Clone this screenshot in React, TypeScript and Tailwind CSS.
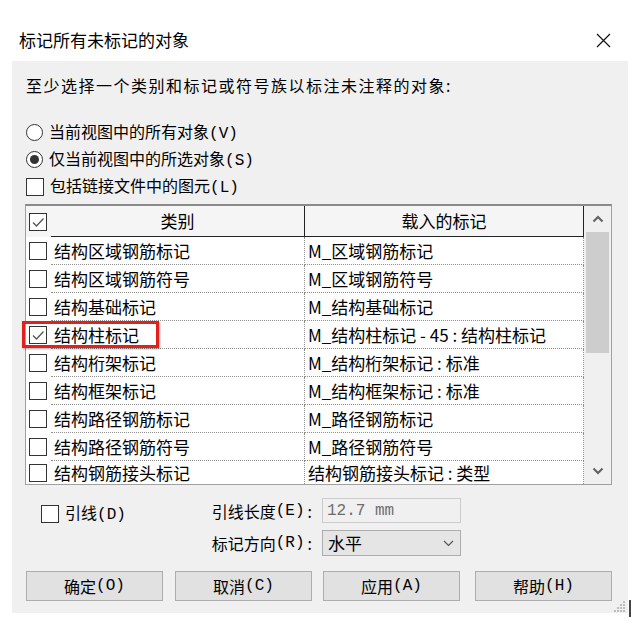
import React from "react";

// [category, loaded tag, checked]
const rows: [string, string, boolean][] = [
  ["结构区域钢筋标记", "M_区域钢筋标记", false],
  ["结构区域钢筋符号", "M_区域钢筋符号", false],
  ["结构基础标记", "M_结构基础标记", false],
  ["结构柱标记", "M_结构柱标记 - 45 : 结构柱标记", true],
  ["结构桁架标记", "M_结构桁架标记 : 标准", false],
  ["结构框架标记", "M_结构框架标记 : 标准", false],
  ["结构路径钢筋标记", "M_路径钢筋标记", false],
  ["结构路径钢筋符号", "M_路径钢筋符号", false],
  ["结构钢筋接头标记", "结构钢筋接头标记 : 类型", false],
];

function Accel({ k }: { k: string }) {
  return (
    <span className="font-[family-name:'Liberation_Mono',monospace] text-[16px]">({k})</span>
  );
}

function CheckBox({ checked }: { checked?: boolean }) {
  return (
    <span className="flex h-[18px] w-[18px] shrink-0 items-center justify-center border border-[#333333] bg-white">
      {checked && (
        <svg width="14" height="14" viewBox="0 0 14 14">
          <polyline
            points="2,7.5 5.5,11 12.5,3.5"
            fill="none"
            stroke="#555555"
            strokeWidth="1.3"
          />
        </svg>
      )}
    </span>
  );
}

function Radio({ selected }: { selected?: boolean }) {
  return (
    <span className="flex h-[17px] w-[17px] shrink-0 items-center justify-center rounded-full border border-[#333333] bg-white">
      {selected && <span className="h-[9px] w-[9px] rounded-full bg-[#333333]" />}
    </span>
  );
}

function Chevron({ up }: { up?: boolean }) {
  return (
    <svg width="12" height="8" viewBox="0 0 12 8">
      <polyline
        points={up ? "1.5,6.5 6,2 10.5,6.5" : "1.5,1.5 6,6 10.5,1.5"}
        fill="none"
        stroke="#606060"
        strokeWidth="2"
      />
    </svg>
  );
}

function Button({ label, k, className }: { label: string; k: string; className: string }) {
  return (
    <button
      className={
        "flex h-[30px] w-[137px] items-center justify-center border border-[#adadad] bg-[#e1e1e1] text-[16px] text-black " +
        className
      }
    >
      {label}
      <Accel k={k} />
    </button>
  );
}

export default function App() {
  return (
    <div className="relative h-[621px] w-[631px] overflow-hidden bg-white font-[family-name:'Noto_Sans_CJK_SC',sans-serif] text-black">
      {/* title bar */}
      <div className="flex h-[61px] items-start justify-between pl-[19px] pr-[20px] pt-[28px]">
        <span className="text-[17px] leading-[24px]">标记所有未标记的对象</span>
        <svg width="15" height="15" viewBox="0 0 15 15" className="mt-[5px]">
          <path d="M1 1L14 14M14 1L1 14" stroke="#111111" strokeWidth="1.2" />
        </svg>
      </div>

      <div className="relative ml-[12px] h-[552px] w-[616px] bg-[#f0f0f0]">
        <p className="pl-[14px] pt-[14px] text-[16px] leading-[20px] tracking-[1.5px]">
          至少选择一个类别和标记或符号族以标注未注释的对象:
        </p>

        <div className="mt-[24px] flex flex-col pl-[14px] text-[16px]">
          <label className="flex h-[27px] items-center gap-[6px]">
            <Radio />
            <span>
              当前视图中的所有对象
              <Accel k="V" />
            </span>
          </label>
          <label className="flex h-[27px] items-center gap-[6px]">
            <Radio selected />
            <span>
              仅当前视图中的所选对象
              <Accel k="S" />
            </span>
          </label>
          <label className="flex h-[27px] items-center gap-[6px]">
            <CheckBox />
            <span>
              包括链接文件中的图元
              <Accel k="L" />
            </span>
          </label>
        </div>

        {/* category table */}
        <div className="relative ml-[13px] mt-[4px] w-[587px]">
          <div className="flex h-[281px] overflow-hidden border border-t-2 border-[#a0a0a0] border-t-[#8a8a8a] bg-white">
            <div className="flex w-[558px] flex-col">
              <div className="flex h-[31px] shrink-0 bg-[#f5f5f5] text-[17px]">
                <div className="flex w-[25px] items-center pl-[3px]">
                  <CheckBox checked />
                </div>
                <div className="flex w-[254px] items-center justify-center border-b border-r border-[#222222]">
                  类别
                </div>
                <div className="flex w-[279px] items-center justify-center border-b border-r border-[#222222]">
                  载入的标记
                </div>
              </div>
              {rows.map(([cat, tag, checked], i) => (
                <div
                  key={cat}
                  className={
                    i === rows.length - 1
                      ? "flex min-h-0 flex-1 text-[17px]"
                      : "flex h-[28px] shrink-0 text-[17px]"
                  }
                >
                  <div className="flex w-[25px] items-center pl-[3px]">
                    <CheckBox checked={checked} />
                  </div>
                  <div
                    className={
                      i === rows.length - 1
                        ? "flex w-[254px] items-center whitespace-nowrap border-r border-dotted border-[#8f8f8f] pl-[3px]"
                        : "flex w-[254px] items-center whitespace-nowrap border-b border-r border-dotted border-[#8f8f8f] pl-[3px]"
                    }
                  >
                    {cat}
                  </div>
                  <div
                    className={
                      i === rows.length - 1
                        ? "flex w-[279px] items-center whitespace-nowrap border-r border-dotted border-[#8f8f8f] pl-[3px]"
                        : "flex w-[279px] items-center whitespace-nowrap border-b border-r border-dotted border-[#8f8f8f] pl-[3px]"
                    }
                  >
                    {tag}
                  </div>
                </div>
              ))}
            </div>

            <div className="flex w-[27px] flex-col bg-[#f0f0f0]">
              <div className="flex h-[26px] items-center justify-center">
                <Chevron up />
              </div>
              <div className="mx-[2px] h-[121px] bg-[#cdcdcd]" />
              <div className="mt-auto flex h-[26px] items-center justify-center">
                <Chevron />
              </div>
            </div>
          </div>

          {/* highlight around the selected row */}
          <div className="absolute left-[-3px] top-[117px] h-[27px] w-[137px] border-[3px] border-[#e3211c] shadow-[1px_1px_2px_rgba(0,0,0,0.35)]" />
        </div>

        {/* leader options */}
        <div className="mt-[13px] flex text-[16px]">
          <div className="w-[190px] pl-[29px]">
            <label className="flex h-[31px] items-center gap-[6px]">
              <CheckBox />
              <span>
                引线
                <Accel k="D" />
              </span>
            </label>
          </div>
          <div className="flex w-[110px] flex-col gap-[7px]">
            <div className="flex h-[25px] items-center justify-end">
              引线长度
              <Accel k="E" />
              <span className="ml-[3px]">:</span>
            </div>
            <div className="flex h-[26px] items-center justify-end">
              标记方向
              <Accel k="R" />
              <span className="ml-[3px]">:</span>
            </div>
          </div>
          <div className="ml-[10px] flex flex-col gap-[7px]">
            <div className="flex h-[25px] w-[139px] items-center border border-[#cccccc] bg-[#f0f0f0] pl-[4px] font-[family-name:'Liberation_Mono',monospace] text-[16px] text-[#6d6d6d]">
              12.7 mm
            </div>
            <div className="flex h-[26px] w-[139px] items-center justify-between border border-[#adadad] bg-[#e5e5e5] pl-[5px] pr-[6px] text-[17px]">
              <span>水平</span>
              <svg width="11" height="7" viewBox="0 0 11 7">
                <polyline points="1,1 5.5,5.5 10,1" fill="none" stroke="#555555" strokeWidth="1.2" />
              </svg>
            </div>
          </div>
        </div>

        <div className="mt-[15px] flex">
          <Button label="确定" k="O" className="ml-[14px]" />
          <Button label="取消" k="C" className="ml-[12px]" />
          <Button label="应用" k="A" className="ml-[11px]" />
          <Button label="帮助" k="H" className="ml-[15px]" />
        </div>

        {/* size grip */}
        <svg width="12" height="11" viewBox="0 0 12 11" className="absolute bottom-[1px] right-[2px]">
          <rect x="9" y="0" width="2" height="2" fill="#bdbdbd" />
          <rect x="6" y="3" width="2" height="2" fill="#bdbdbd" />
          <rect x="9" y="3" width="2" height="2" fill="#bdbdbd" />
          <rect x="3" y="6" width="2" height="2" fill="#bdbdbd" />
          <rect x="6" y="6" width="2" height="2" fill="#bdbdbd" />
          <rect x="9" y="6" width="2" height="2" fill="#bdbdbd" />
          <rect x="0" y="9" width="2" height="2" fill="#bdbdbd" />
          <rect x="3" y="9" width="2" height="2" fill="#bdbdbd" />
          <rect x="6" y="9" width="2" height="2" fill="#bdbdbd" />
          <rect x="9" y="9" width="2" height="2" fill="#bdbdbd" />
        </svg>
      </div>

      <div className="absolute left-[629px] top-[600px] h-[17px] w-[2px] bg-[#444444]" />
    </div>
  );
}
